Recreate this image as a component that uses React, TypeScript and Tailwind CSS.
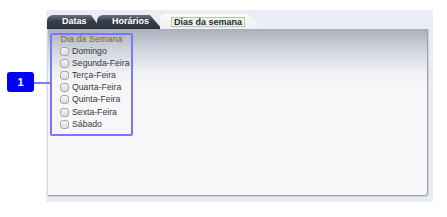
import React from 'react';

const days = ['Domingo', 'Segunda-Feira', 'Terça-Feira', 'Quarta-Feira', 'Quinta-Feira', 'Sexta-Feira', 'Sábado'];

export default function App() {
  return (
    <div className="relative w-[447px] h-[217px] bg-white font-['Liberation_Sans',Arial,sans-serif]">
      {/* callout marker */}
      <div className="absolute left-[7px] top-[72px] w-[27px] h-[20px] rounded-[3px] bg-[#0000f5] text-white text-[11px] font-bold flex items-center justify-center">
        1
      </div>
      <div className="absolute left-[34px] top-[82px] w-[16px] h-[2px] bg-[#7b7bff]" />

      <div className="pt-[10px] pl-[46px]">
        <div className="w-[387px] h-[192px] bg-[#eaedf3] pt-[4px] pl-[1px] flex flex-col">
          {/* tabs */}
          <div className="flex items-end h-[15px]">
            <div className="w-[54px] h-[14px] rounded-tl-[6px] bg-[linear-gradient(to_bottom,#6a7280,#3a414c_40%,#2c323b)] [clip-path:polygon(0_0,44px_0,100%_100%,0_100%)] pl-[15px] flex items-center text-white text-[9px] font-bold">
              Datas
            </div>
            <div className="-ml-[4px] w-[65px] h-[14px] rounded-tl-[6px] bg-[linear-gradient(to_bottom,#6a7280,#3a414c_40%,#2c323b)] [clip-path:polygon(0_0,53px_0,100%_100%,0_100%)] pl-[15px] flex items-center text-white text-[9px] font-bold">
              Horários
            </div>
            <div className="-ml-[2px] w-[102px] h-[15px] rounded-tl-[6px] bg-[linear-gradient(to_bottom,#fbfbfd,#eceef3)] [clip-path:polygon(0_0,87px_0,100%_100%,0_100%)] pl-[11px] flex items-center">
              <span className="px-[2px] h-[10px] leading-[9px] border border-[#b9c9a4] bg-[#eef3e4] text-[#1c2a3c] text-[9px] font-bold">
                Dias da semana
              </span>
            </div>
          </div>

          {/* panel */}
          <div className="w-[381px] h-[167px] border-l border-[#d8dbe2] border-r border-r-[#9da1aa] border-b border-b-[#9da1aa] rounded-br-[4px] shadow-[1px_1px_1px_rgba(0,0,0,0.12)] bg-[linear-gradient(to_bottom,#a9afbd_0px,#d3d6de_22px,#f2f3f6_45px,#f7f7f9_60px)] pl-[2px] pt-[4px]">
            <div className="w-[83px] h-[103px] border-2 border-[#7878ff] rounded-[2px] flex flex-col">
              <div className="text-center text-[9px] text-[#86682a] leading-[8px] mt-0">Dia da Semana</div>
              <div className="flex flex-col pl-[8px] mt-[2px]">
                {days.map(d => (
                  <label key={d} className="flex items-center gap-[3px] h-[12.2px] text-[8.7px] text-[#3a3a3a]">
                    <span className="w-[9px] h-[9px] rounded-[3px] border border-[#a8a8a8] bg-[linear-gradient(to_bottom,#f4f4f4,#dcdcdc)]" />
                    {d}
                  </label>
                ))}
              </div>
            </div>
          </div>
        </div>
      </div>
    </div>
  );
}
